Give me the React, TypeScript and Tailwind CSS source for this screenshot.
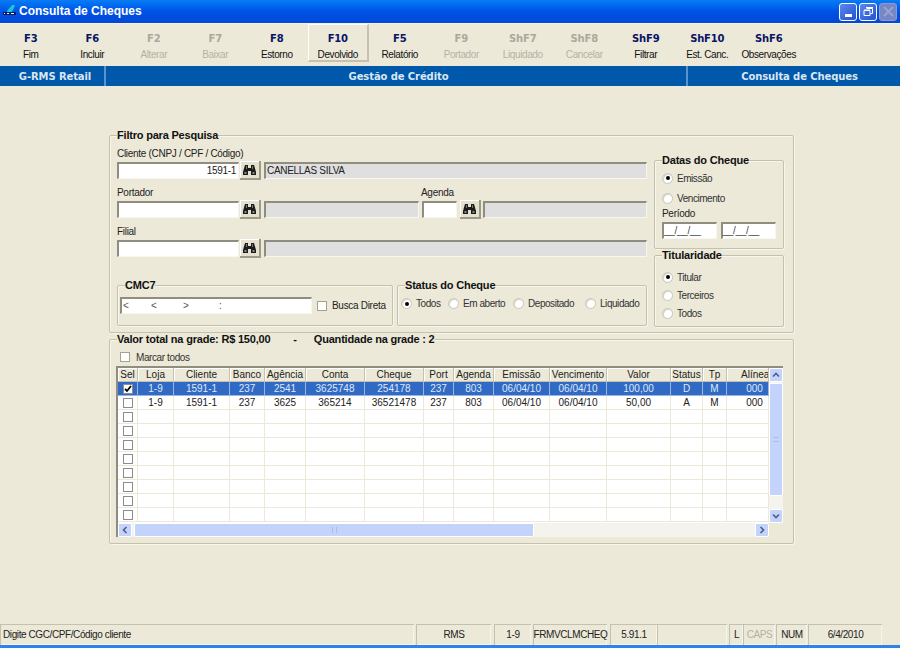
import type { ReactNode } from "react";

const sans = "font-['Liberation_Sans',Arial,sans-serif]";
const bold = "font-['DejaVu_Sans',Verdana,sans-serif] font-bold";

const tools = [
  { key: "F3", label: "Fim" },
  { key: "F6", label: "Incluir" },
  { key: "F2", label: "Alterar", off: true },
  { key: "F7", label: "Baixar", off: true },
  { key: "F8", label: "Estorno" },
  { key: "F10", label: "Devolvido", hot: true },
  { key: "F5", label: "Relatório" },
  { key: "F9", label: "Portador", off: true },
  { key: "ShF7", label: "Liquidado", off: true },
  { key: "ShF8", label: "Cancelar", off: true },
  { key: "ShF9", label: "Filtrar" },
  { key: "ShF10", label: "Est. Canc." },
  { key: "ShF6", label: "Observações" },
];

const columns = [
  { name: "Sel", w: "w-[20px]" },
  { name: "Loja", w: "w-[36px]" },
  { name: "Cliente", w: "w-[56px]" },
  { name: "Banco", w: "w-[35px]" },
  { name: "Agência", w: "w-[41px]" },
  { name: "Conta", w: "w-[59px]" },
  { name: "Cheque", w: "w-[59px]" },
  { name: "Port", w: "w-[30px]" },
  { name: "Agenda", w: "w-[40px]" },
  { name: "Emissão", w: "w-[56px]" },
  { name: "Vencimento", w: "w-[57px]" },
  { name: "Valor", w: "w-[64px]" },
  { name: "Status", w: "w-[32px]" },
  { name: "Tp", w: "w-[24px]" },
  { name: "Alínea", w: "w-[42px] pl-[14px]" },
];

const rows = [
  ["1-9", "1591-1", "237", "2541", "3625748", "254178", "237", "803", "06/04/10", "06/04/10", "100,00", "D", "M", "000"],
  ["1-9", "1591-1", "237", "3625", "365214", "36521478", "237", "803", "06/04/10", "06/04/10", "50,00", "A", "M", "000"],
  ...Array.from({ length: 8 }, () => Array.from({ length: 14 }, () => "")),
];

const status = [
  { text: "Digite CGC/CPF/Código cliente", w: "w-[414px]" },
  { text: "RMS", w: "w-[75px] ml-[2px]", center: true },
  { text: "1-9", w: "w-[37px] ml-[3px]", center: true },
  { text: "FRMVCLMCHEQ", w: "w-[74px] ml-[2px]", center: true },
  { text: "5.91.1", w: "w-[47px] ml-[3px]", center: true },
  { text: "", w: "w-[70px]" },
  { text: "L", w: "w-[14px] ml-[2px]", center: true },
  { text: "CAPS", w: "w-[32px]", center: true, off: true },
  { text: "NUM", w: "w-[31px] ml-[1px]", center: true },
  { text: "6/4/2010", w: "w-[74px] ml-[1px]", center: true },
];

const Binoculars = () => (
  <svg width="15" height="12" viewBox="0 0 15 12">
    <path d="M3 1h3v3h3V1h3l2 7v3H9V7H6v4H1V8z" fill="#1c1c1c" />
    <path d="M2.500 8h2v2h-2zM10.500 8h2v2h-2z" fill="#8a8a80" />
    <path d="M4 2h1v3H4zM10 2h1v3h-1z" fill="#77776c" />
  </svg>
);

const FindButton = ({ className = "" }: { className?: string }) => (
  <button className={`flex h-[19px] w-[21px] shrink-0 items-center justify-center border-r-2 border-b-2 border-[#9d9a88] bg-[#e4e1d0] shadow-[inset_1px_1px_0_#fff] ${className}`}>
    <Binoculars />
  </button>
);

const Sunken = ({ className, children }: { className: string; children?: ReactNode }) => (
  <div className={`h-[17px] border-t-2 border-l-2 border-[#8f8d80] border-r border-r-[#f7f6ef] border-b border-b-[#f7f6ef] text-[10px] leading-[13px] text-[#222] ${className}`}>
    {children}
  </div>
);

const Group = ({ title, className, children }: { title: string; className: string; children?: ReactNode }) => (
  <div className={`relative rounded-[2px] border border-[#c4c1af] shadow-[inset_1px_1px_0_#f6f5ee,1px_1px_0_#f6f5ee] ${className}`}>
    <span className={`absolute left-[7px] top-[-7px] bg-[#ece9d8] text-[11px] leading-[13px] font-bold tracking-[-0.2px] whitespace-pre text-[#111] ${sans}`}>
      {title}
    </span>
    {children}
  </div>
);

const Radio = ({ on, label, className = "" }: { on?: boolean; label: string; className?: string }) => (
  <div className={`flex h-[18px] items-center gap-[4px] ${className}`}>
    <span className="flex h-[11px] w-[11px] shrink-0 items-center justify-center rounded-full border border-[#c9c6b6] bg-white shadow-[inset_1px_1px_0_#d8d6c8]">
      {on && <span className="h-[4px] w-[4px] rounded-full bg-black" />}
    </span>
    <span className="text-[10px] tracking-[-0.45px] whitespace-nowrap text-[#333]">{label}</span>
  </div>
);

const Check = ({ checked, soft }: { checked?: boolean; soft?: boolean }) => (
  <span className={`flex h-[10px] w-[10px] shrink-0 items-center justify-center border bg-white ${soft ? "border-[#a5a294]" : "border-[#8c8c8c]"}`}>
    {checked && (
      <svg width="8" height="8" viewBox="0 0 8 8">
        <path d="M1 4l2 2 4-5" fill="none" stroke="#000" strokeWidth="1.800" />
      </svg>
    )}
  </span>
);

const Arrow = ({ d }: { d: string }) => (
  <span className="flex h-[14px] w-[14px] shrink-0 items-center justify-center rounded-[2px] border border-white bg-[#c3d3fb]">
    <svg width="8" height="8" viewBox="0 0 8 8">
      <path d={d} fill="none" stroke="#4d6185" strokeWidth="1.600" />
    </svg>
  </span>
);

const LogoIcon = () => (
  <svg width="16" height="16" viewBox="0 0 16 16" className="shrink-0">
    <path d="M5 7l5-6h3l-1 3-4 7H6z" fill="#19c8d8" />
    <path d="M1 8h13v3H1z" fill="#0a1f6a" />
    <path d="M2 9h1v1H2zM5 9h2v1H5zM9 9h3v1H9z" fill="#e8f4ff" />
  </svg>
);

const TitleButton = ({ children, off }: { children: ReactNode; off?: boolean }) => (
  <div className={`flex h-[18px] w-[18px] items-center justify-center rounded-[3px] border ${off ? "border-[#8d9bd0] bg-[#7787c4]" : "border-white bg-gradient-to-br from-[#5d87ee] to-[#2450d0]"}`}>
    {children}
  </div>
);

export default function App() {
  return (
    <div className={`flex h-[648px] w-[900px] flex-col overflow-hidden bg-[#ece9d8] ${sans}`}>
      <div className="flex h-[23px] shrink-0 items-center bg-gradient-to-b from-[#0a7cf5] via-[#0052e6] to-[#0148d6] pr-[3px] pl-[2px]">
        <LogoIcon />
        <span className={`ml-[1px] pb-[2px] text-[12px] font-bold text-white ${sans}`}>Consulta de Cheques</span>
        <div className="ml-auto flex gap-[2px]">
          <TitleButton>
            <span className="mt-[8px] h-[3px] w-[7px] bg-white" />
          </TitleButton>
          <TitleButton>
            <svg width="11" height="11" viewBox="0 0 11 11">
              <path d="M3.500 2.500h6v5h-2M1 4.500h6v5H1z" fill="none" stroke="#fff" />
              <path d="M3 1.500h7M1 4h6" stroke="#fff" />
            </svg>
          </TitleButton>
          <TitleButton off>
            <svg width="11" height="11" viewBox="0 0 11 11">
              <path d="M1 1l9 9M10 1l-9 9" stroke="#97a3d2" strokeWidth="2" />
            </svg>
          </TitleButton>
        </div>
      </div>

      <div className="flex h-[43px] shrink-0 border-t border-[#f5f3e8]">
        {tools.map((t) => (
          <div
            key={t.key}
            className={`flex w-[61.500px] flex-col items-center text-center ${t.hot ? "h-[38px] border-t border-r-2 border-b-2 border-l border-t-white border-r-[#c5c2b0] border-b-[#c5c2b0] border-l-white pt-[7px]" : "pt-[8px]"}`}
          >
            <span className={`text-[10px] leading-[13px] tracking-[-0.2px] ${bold} ${t.off ? "text-[#aaa89c]" : "text-[#0a1464]"}`}>{t.key}</span>
            <span className={`mt-[3px] text-[10px] leading-[13px] tracking-[-0.4px] whitespace-nowrap ${t.off ? "text-[#b4b2a6]" : "text-[#111]"}`}>{t.label}</span>
          </div>
        ))}
      </div>

      <div className={`flex h-[20px] shrink-0 items-center bg-[#0058aa] text-[10px] tracking-[-0.1px] text-[#dbe6f2] ${bold}`}>
        <div className="flex h-full w-[106px] items-center justify-center border-r-2 border-[#5a94cc] pl-[6px]">G-RMS Retail</div>
        <div className="flex h-full w-[580px] items-center justify-center pl-[5px]">Gestão de Crédito</div>
        <div className="flex h-full flex-1 items-center justify-center border-l-2 border-[#5a94cc] pl-[11px]">Consulta de Cheques</div>
      </div>

      <div className="flex-1 pt-[49px] pl-[109px]">
        <Group title="Filtro para Pesquisa" className="flex h-[198px] w-[685px] pt-[11px] pl-[7px]">
          <div className="w-[530px] text-[10px] tracking-[-0.3px] text-[#222]">
            <div className="h-[14px] leading-[14px]">Cliente (CNPJ / CPF / Código)</div>
            <div className="mt-[1px] flex h-[17px] items-center">
              <Sunken className="w-[122px] bg-white pr-[2px] text-right">1591-1</Sunken>
              <FindButton className="ml-[1px]" />
              <Sunken className="ml-[3px] flex-1 bg-[#dfdfdf] pl-[1px] leading-[11px]">CANELLAS SILVA</Sunken>
            </div>

            <div className="mt-[7px] flex h-[14px] leading-[14px]">
              <span className="w-[304px]">Portador</span>
              <span>Agenda</span>
            </div>
            <div className="mt-[1px] flex h-[17px] items-center">
              <Sunken className="w-[122px] bg-white" />
              <FindButton className="ml-[1px]" />
              <Sunken className="ml-[3px] w-[155px] bg-[#dfdfdf]" />
              <Sunken className="ml-[3px] w-[35px] bg-white" />
              <FindButton className="ml-[3px]" />
              <Sunken className="ml-[2px] flex-1 bg-[#dfdfdf]" />
            </div>

            <div className="mt-[7px] h-[14px] leading-[14px]">Filial</div>
            <div className="mt-[1px] flex h-[17px] items-center">
              <Sunken className="w-[122px] bg-white" />
              <FindButton className="ml-[1px]" />
              <Sunken className="ml-[3px] flex-1 bg-[#dfdfdf]" />
            </div>

            <div className="mt-[28px] flex">
              <Group title="CMC7" className="flex h-[41px] w-[276px] items-center pl-[2px]">
                <Sunken className="flex w-[192px] bg-white pl-[1px] text-[#555]">
                  <span className="w-[28px]">&lt;</span>
                  <span className="w-[32px]">&lt;</span>
                  <span className="w-[36px]">&gt;</span>
                  <span>:</span>
                </Sunken>
                <span className="ml-[5px]"><Check soft /></span>
                <span className="ml-[5px] whitespace-nowrap">Busca Direta</span>
              </Group>
              <Group title="Status do Cheque" className="ml-[4px] flex h-[41px] w-[250px] items-center pb-[4px] pl-[3px]">
                <Radio on label="Todos" className="w-[47px]" />
                <Radio label="Em aberto" className="w-[65px]" />
                <Radio label="Depositado" className="w-[72px]" />
                <Radio label="Liquidado" />
              </Group>
            </div>
          </div>

          <div className="ml-[7px] w-[130px] pt-[13px] text-[10px] tracking-[-0.3px] text-[#222]">
            <Group title="Datas do Cheque" className="h-[89px] px-[7px] pt-[8px]">
              <Radio on label="Emissão" />
              <Radio label="Vencimento" className="mt-[2px]" />
              <div className="h-[14px] leading-[14px]">Período</div>
              <div className="mt-[1px] flex gap-[4px]">
                <Sunken className="w-[55px] bg-white text-[#444]">__/__/__</Sunken>
                <Sunken className="w-[56px] bg-white text-[#444]">__/__/__</Sunken>
              </div>
            </Group>
            <Group title="Titularidade" className="mt-[6px] h-[72px] px-[7px] pt-[12px]">
              <Radio on label="Titular" />
              <Radio label="Terceiros" />
              <Radio label="Todos" />
            </Group>
          </div>
        </Group>

        <Group title="Valor total na grade: R$ 150,00        -      Quantidade na grade : 2" className="mt-[6px] h-[205px] w-[685px] pt-[10px] pl-[6px]">
          <div className="flex h-[14px] items-center pl-[4px] text-[10px] tracking-[-0.4px] text-[#333]">
            <Check soft />
            <span className="ml-[6px]">Marcar todos</span>
          </div>
          <div className="mt-[2px] flex h-[171px] w-[667px] flex-col border-t-2 border-l-2 border-[#8f8d80] bg-white text-[10px] text-[#222]">
            <div className="flex h-[155px]">
              <div className="w-[651px]">
                <div className="flex h-[14px] bg-[#ece9d8]">
                  {columns.map((c) => (
                    <div key={c.name} className={`${c.w} overflow-hidden border-r border-b border-r-[#c4c1af] border-b-[#c4c1af] text-center leading-[13px] whitespace-nowrap shadow-[inset_1px_1px_0_#fff]`}>
                      {c.name}
                    </div>
                  ))}
                </div>
                {rows.map((row, i) => (
                  <div key={i} className={`flex h-[14px] ${i === 0 ? "bg-[#316ac5] text-[#dfe8f6]" : ""}`}>
                    <div className={`flex w-[20px] items-center justify-center border-r border-b ${i === 0 ? "border-[#9db5de]" : "border-[#ece9d8]"}`}>
                      <Check checked={i === 0} />
                    </div>
                    {row.map((cell, j) => (
                      <div key={j} className={`${columns[j + 1].w} border-r border-b text-center leading-[13px] ${i === 0 ? "border-[#9db5de]" : "border-[#ece9d8]"}`}>
                        {cell}
                      </div>
                    ))}
                  </div>
                ))}
              </div>
              <div className="flex w-[14px] flex-col bg-[#f4f3ee]">
                <Arrow d="M1 5.500l3-3 3 3" />
                <div className="mt-[1px] flex h-[113px] items-center justify-center rounded-[2px] border border-white bg-[#c3d3fb]">
                  <span className="h-[5px] w-[6px] border-y border-[#a9bdea]" />
                </div>
                <div className="flex-1" />
                <Arrow d="M1 2.500l3 3 3-3" />
              </div>
            </div>
            <div className="flex h-[14px]">
              <div className="flex w-[651px] bg-[#f4f3ee]">
                <Arrow d="M5.500 1l-3 3 3 3" />
                <div className="ml-[2px] flex w-[400px] items-center justify-center rounded-[2px] border border-white bg-[#c3d3fb]">
                  <span className="h-[6px] w-[5px] border-x border-[#a9bdea]" />
                </div>
                <div className="flex-1" />
                <Arrow d="M2.500 1l3 3-3 3" />
              </div>
              <div className="w-[14px] bg-[#ece9d8]" />
            </div>
          </div>
        </Group>
      </div>

      <div className="flex h-[21px] shrink-0 text-[10px] tracking-[-0.4px] text-[#222]">
        {status.map((s, i) => (
          <div
            key={i}
            className={`${s.w} flex items-center border-t border-l border-[#c4c1af] pb-[1px] shadow-[inset_-1px_-1px_0_#f6f5ee] ${s.center ? "justify-center" : "pl-[2px]"} ${s.off ? "text-[#b4b2a6]" : ""}`}
          >
            {s.text}
          </div>
        ))}
      </div>
      <div className="h-[3px] shrink-0 bg-[#2f83e8]" />
    </div>
  );
}
